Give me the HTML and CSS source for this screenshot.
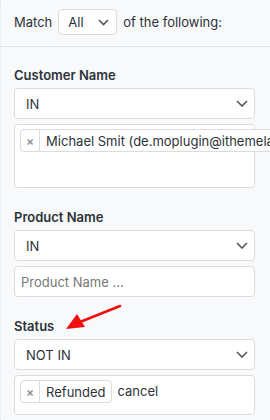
FILE: index.html
```html
<!DOCTYPE html>
<html lang="en">
<head>
  <meta charset="UTF-8">
  <title>Conditions</title>
  <meta name="viewport" content="width=device-width, initial-scale=1.0">
  <link rel="stylesheet" href="styles.css">
</head>
<body>
  <div class="panel">
    <div class="match-row">
      <span>Match</span>
      <div class="select select-small">
        <span>All</span>
        <svg class="chevron" width="11" height="7" viewBox="0 0 11 7"><path d="M1 1l4.5 4.5L10 1" fill="none" stroke="#50575e" stroke-width="1.6"/></svg>
      </div>
      <span>of the following:</span>
    </div>

    <div class="fields">
      <div class="field">
        <label>Customer Name</label>
        <div class="select">
          <span>IN</span>
          <svg class="chevron" width="12" height="7" viewBox="0 0 12 7"><path d="M1 1l5 5 5-5" fill="none" stroke="#50575e" stroke-width="1.6"/></svg>
        </div>
        <div class="multi multi-tall">
          <span class="tag"><span class="tag-x">×</span><span class="tag-text">Michael Smit (de.moplugin@ithemela</span></span>
        </div>
      </div>

      <div class="field">
        <label>Product Name</label>
        <div class="select">
          <span>IN</span>
          <svg class="chevron" width="12" height="7" viewBox="0 0 12 7"><path d="M1 1l5 5 5-5" fill="none" stroke="#50575e" stroke-width="1.6"/></svg>
        </div>
        <div class="input"><span class="placeholder">Product Name ...</span></div>
      </div>

      <div class="field">
        <label>Status</label>
        <div class="select">
          <span>NOT IN</span>
          <svg class="chevron" width="12" height="7" viewBox="0 0 12 7"><path d="M1 1l5 5 5-5" fill="none" stroke="#50575e" stroke-width="1.6"/></svg>
        </div>
        <div class="multi">
          <span class="tag"><span class="tag-x">×</span><span class="tag-text">Refunded</span></span>
          <span class="typed">cancel</span>
        </div>
      </div>
    </div>

    <svg class="arrow" width="60" height="30" viewBox="0 0 60 30">
      <path d="M56 2L16 18" stroke="#f01010" stroke-width="2.6" stroke-linecap="round"/>
      <path d="M2 25L13 10L21 23Z" fill="#f01010"/>
    </svg>
  </div>
</body>
</html>
```

FILE: styles.css
```css
:root {
  --bg: #f8f9fa;
  --border: #dcdcde;
  --text: #2c3338;
  --muted: #8c8f94;
}

* {
  margin: 0;
  padding: 0;
  box-sizing: border-box;
}

body {
  font-family: 'Inter', 'Liberation Sans', sans-serif;
  font-size: 13px;
  color: var(--text);
  background: var(--bg);
  width: 270px;
  height: 420px;
  overflow: hidden;
}

.panel {
  position: relative;
  height: 100%;
  border-left: 1px dotted #e2e4e7;
}

/* Match row */
.match-row {
  display: flex;
  align-items: center;
  gap: 6px;
  padding: 9px 0 11px 13px;
  border-bottom: 1px solid #e2e4e7;
}

.select {
  display: flex;
  align-items: center;
  justify-content: space-between;
  height: 31px;
  padding: 0 6px 0 11px;
  background: #fff;
  border: 1px solid var(--border);
  border-radius: 4px;
}

.select-small {
  width: 59px;
  height: 26px;
  padding: 0 7px 0 9px;
}

.chevron {
  display: block;
}

/* Fields */
.fields {
  display: flex;
  flex-direction: column;
  gap: 21px;
  padding: 20px 15px 0 13px;
}

.field {
  display: flex;
  flex-direction: column;
  gap: 5px;
}

.field label {
  font-weight: 600;
  font-size: 13px;
  line-height: 16px;
}

.input {
  display: flex;
  align-items: center;
  height: 31px;
  padding: 0 6px;
  background: #fff;
  border: 1px solid var(--border);
  border-radius: 4px;
}

.placeholder {
  color: #777;
}

.multi {
  display: flex;
  align-items: flex-start;
  gap: 6px;
  height: 40px;
  padding: 4px 5px;
  background: #fff;
  border: 1px solid var(--border);
  border-radius: 4px;
  white-space: nowrap;
}

.multi-tall {
  height: 64px;
}

.tag {
  display: flex;
  align-items: stretch;
  height: 23px;
  border: 1px solid var(--border);
  border-radius: 4px;
  background: #fff;
  flex-shrink: 0;
}

.tag-x {
  display: flex;
  align-items: center;
  padding: 0 5px;
  color: var(--muted);
  font-size: 12px;
  font-weight: 600;
  border-right: 1px solid var(--border);
}

.tag-text {
  display: flex;
  align-items: center;
  padding: 0 5px 0 6px;
}

.typed {
  line-height: 23px;
}

/* Annotation */
.arrow {
  position: absolute;
  left: 63px;
  top: 304px;
}
```
